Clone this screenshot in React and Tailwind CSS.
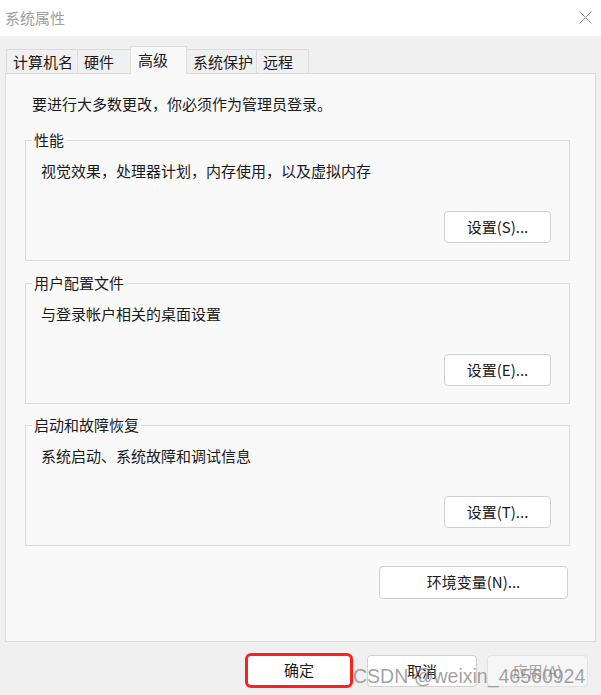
const font = { fontFamily: '"Noto Sans CJK SC", "Noto Sans", sans-serif' };

const tabs = [
    { label: "计算机名", w: "w-[72px] border-l" },
    { label: "硬件", w: "w-[53px]" },
    { label: "高级", w: "w-[57px]", active: true },
    { label: "系统保护", w: "w-[70px]" },
    { label: "远程", w: "w-[52px]" },
];

function Group({ title, text, button }) {
    return (
        <fieldset className="ml-[19px] w-[545px] h-[131px] border border-[#dcdcdc]">
            <legend className="ml-[6px] px-[2px] text-[15px] leading-[20px] text-[#1a1a1a]">{title}</legend>
            <div className="mt-[11px] pl-[15px] text-[15px] leading-[20px] text-[#1a1a1a]">{text}</div>
            <div className="mt-[30px] pr-[18px] flex justify-end">
                <button className="w-[107px] h-[32px] rounded-[4px] border border-[#d0d0d0] bg-white text-[15px] text-[#1a1a1a]">
                    {button}
                </button>
            </div>
        </fieldset>
    );
}

export default function App() {
    return (
        <div className="relative w-[601px] h-[695px] bg-[#f0f0f0] overflow-hidden" style={font}>
            {/* title bar */}
            <div className="h-9 bg-white flex items-center justify-between pl-[5px] pr-[9px]">
                <span className="text-[15px] text-[#a0a0a0]">系统属性</span>
                <svg width="13" height="13" viewBox="0 0 13 13" className="mt-[-1px]">
                    <path d="M0.5 0.5 L12.5 12.5 M12.5 0.5 L0.5 12.5" stroke="#8a8a8a" strokeWidth="1" />
                </svg>
            </div>

            <div className="pl-[5px] pr-[5px]">
                {/* tabs */}
                <div className="mt-[10px] h-[27px] flex items-end pl-px">
                    {tabs.map((t) =>
                        t.active ? (
                            <div
                                key={t.label}
                                className={`${t.w} h-[28px] -mb-px relative z-10 bg-[#f9f9f9] border border-b-0 border-[#dcdcdc] -ml-px pl-[7px] pt-[3px] text-[15px] leading-[20px] text-[#1a1a1a]`}
                            >
                                {t.label}
                            </div>
                        ) : (
                            <div
                                key={t.label}
                                className={`${t.w} h-[24px] bg-[#f0f0f0] border-t border-r border-[#dcdcdc] pl-[6px] pt-[2px] text-[15px] leading-[20px] text-[#1a1a1a]`}
                            >
                                {t.label}
                            </div>
                        )
                    )}
                </div>

                {/* panel */}
                <div className="h-[569px] border border-[#dcdcdc] bg-[#f9f9f9]">
                    <div className="pt-[20px] pl-[26px] text-[15px] leading-[20px] text-[#1a1a1a]">
                        要进行大多数更改，你必须作为管理员登录。
                    </div>
                    <div className="mt-[16px]">
                        <Group title="性能" text="视觉效果，处理器计划，内存使用，以及虚拟内存" button="设置(S)..." />
                    </div>
                    <div className="mt-[12px]">
                        <Group title="用户配置文件" text="与登录帐户相关的桌面设置" button="设置(E)..." />
                    </div>
                    <div className="mt-[11px]">
                        <Group title="启动和故障恢复" text="系统启动、系统故障和调试信息" button="设置(T)..." />
                    </div>
                    <div className="mt-[20px] w-[562px] flex justify-end">
                        <button className="w-[189px] h-[33px] rounded-[4px] border border-[#d0d0d0] bg-white text-[15px] text-[#1a1a1a]">
                            环境变量(N)...
                        </button>
                    </div>
                </div>
            </div>

            {/* bottom buttons */}
            <div className="mt-[11px] pr-[13px] flex justify-end items-start">
                <div className="w-[108px] h-[35px] rounded-[6px] border-[3px] border-[#ff1f1f] bg-white flex items-center justify-center">
                    <span className="text-[15px] text-[#1a1a1a]">确定</span>
                </div>
                <button className="ml-[14px] mt-[2px] w-[110px] h-[32px] rounded-[4px] border border-[#d0d0d0] bg-white text-[15px] text-[#1a1a1a]">
                    取消
                </button>
                <button className="ml-[10px] mt-[2px] w-[101px] h-[32px] rounded-[4px] border border-[#e3e3e3] bg-[#f6f6f6] text-[15px] text-[#a8a8a8]">
                    应用(A)
                </button>
            </div>

            {/* watermark */}
            <div
                className="absolute left-[353px] top-[665px] text-[19.5px] leading-[22px] text-[#7a7a7a]/70 whitespace-nowrap"
                style={{ fontFamily: '"Liberation Sans", Arial, sans-serif' }}
            >
                CSDN @weixin_46560924
            </div>
        </div>
    );
}
